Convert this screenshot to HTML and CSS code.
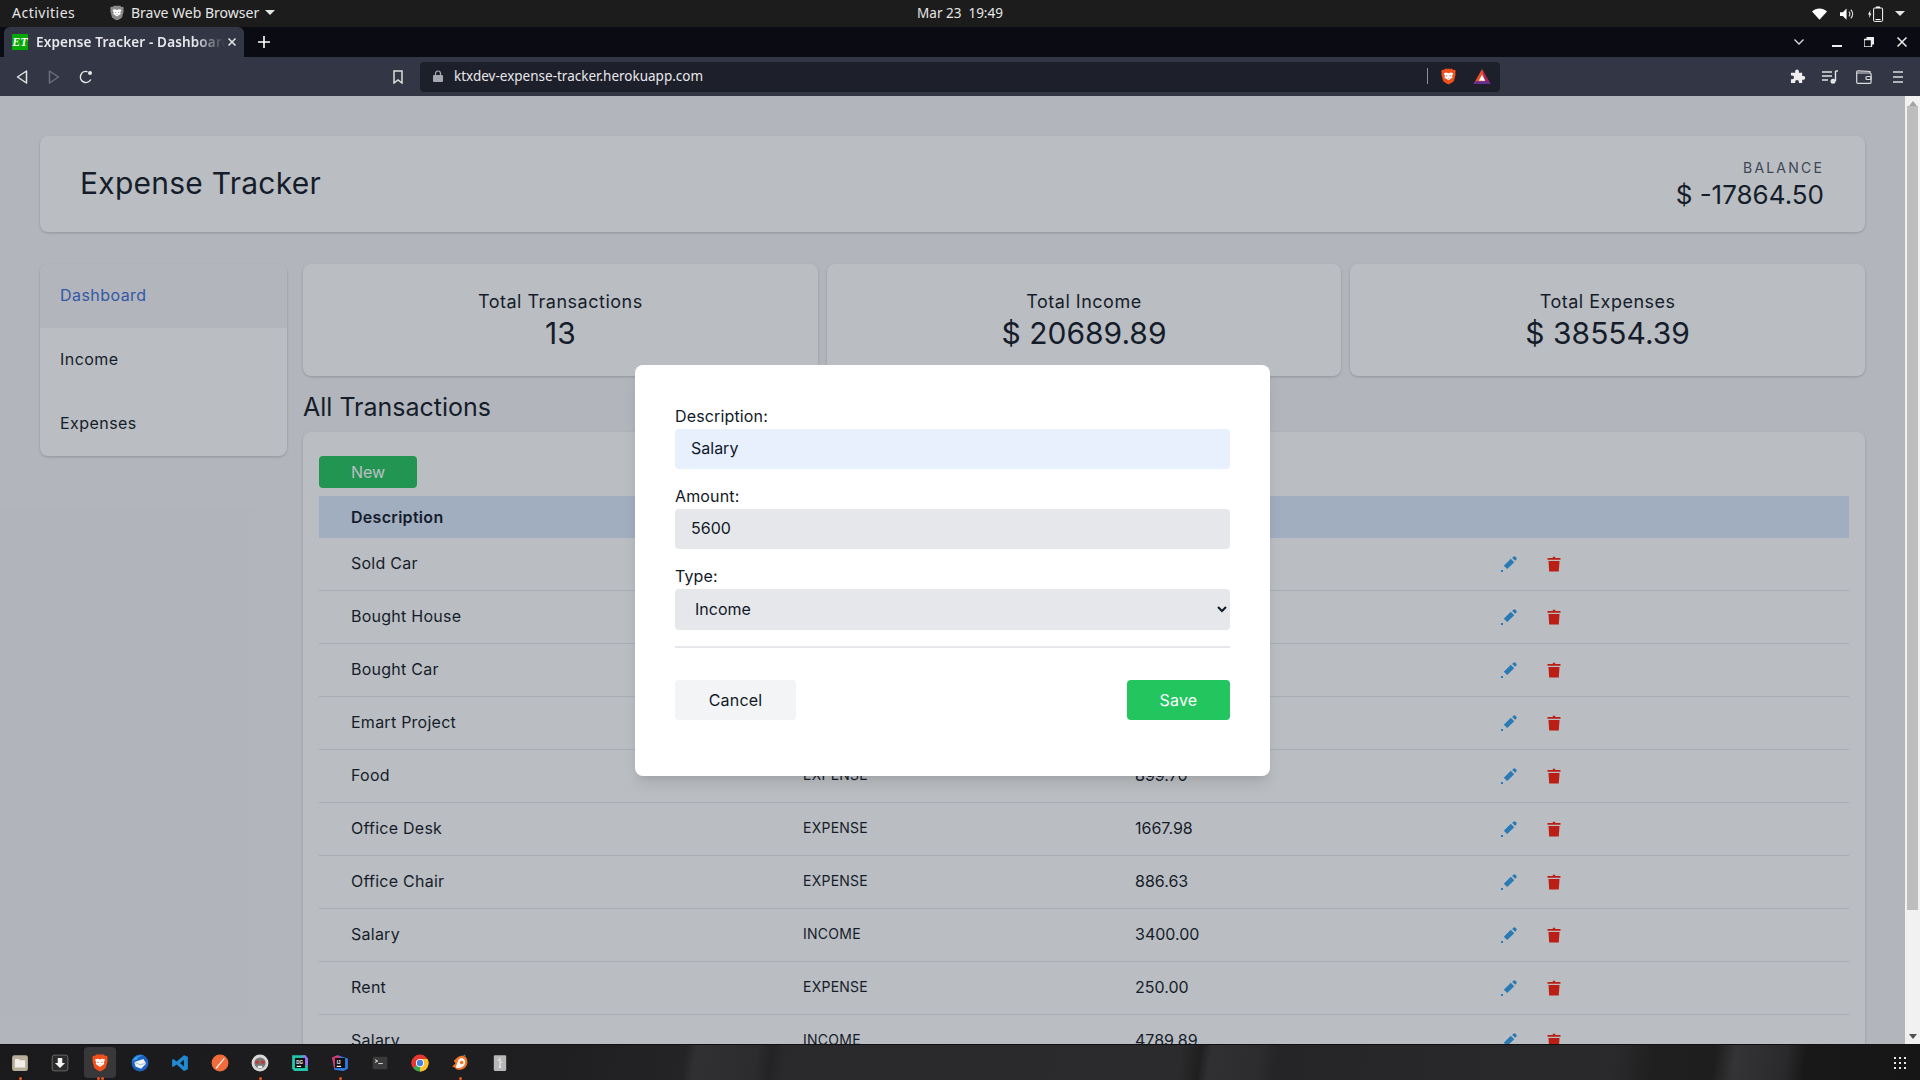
FILE: index.html
```html
<!DOCTYPE html>
<html lang="en">
<head>
<meta charset="utf-8">
<title>Expense Tracker - Dashboard</title>
<link rel="stylesheet" href="styles.css">
</head>
<body>
<svg class="sprite" aria-hidden="true">
  <symbol id="pen" viewBox="0 0 16 16">
    <path d="M2.800 9.700 9.800 2.800 13.200 6.200 6.200 13.100Z" fill="currentColor"/>
    <path d="M11.200 1.900 12.300.8a1.500 1.500 0 0 1 2.100 0l.8.800a1.500 1.500 0 0 1 0 2.100l-1.100 1.100Z" fill="currentColor"/>
    <rect x="0" y="14" width="2" height="2" fill="currentColor"/>
  </symbol>
  <symbol id="trash" viewBox="0 0 16 16">
    <path d="M1.500 2h5.300V.8h2.400V2h5.300v1.700h-13Z" fill="currentColor"/>
    <path d="M2.500 5h11l-.7 10.600H3.200Z" fill="currentColor"/>
  </symbol>
  <symbol id="shield" viewBox="0 0 16 18">
    <path d="M4.200.6h7.600l1.300 1.500 1.700-.3 1 1.600-.6 1.600.5 1.700-2 7.300-3.200 2.300L8 17.400l-2.500-1.100-3.200-2.300-2-7.300.5-1.700-.6-1.600 1-1.600 1.700.3Z" fill="currentColor"/>
    <path d="M3 5.400 5.600 4.800 8 5.600l2.400-.8L13 5.400l-1.200 3 .5 1.600-2.300 1.600L8 13l-2-1.400L3.700 10l.5-1.600Z" fill="#fff"/>
    <path d="M5.200 7.600 7 8.300 5.900 9.300ZM10.800 7.600 9 8.300 10.100 9.300ZM7.200 10.500h1.600L8 11.500Z" fill="currentColor"/>
  </symbol>
</svg>

<div class="topbar">
  <div class="top-left">
    <span class="activities">Activities</span>
    <span class="app-menu">
      <svg class="app-shield"><use href="#shield"/></svg>
      <span>Brave Web Browser</span>
      <i class="caret"></i>
    </span>
  </div>
  <div class="clock">Mar 23&nbsp;&nbsp;19:49</div>
  <div class="top-right">
    <svg class="tray-wifi" viewBox="0 0 16 12"><path d="M0 3.300C4.500-.9 11.500-.9 16 3.300L8 12Z" fill="#fff"/></svg>
    <svg class="tray-sound" viewBox="0 0 16 12"><path d="M0 4h3l4-4v12L3 8H0Z" fill="#fff"/><path d="M9.500 3.500a3.500 3.500 0 0 1 0 5M11.500 1.500a6 6 0 0 1 0 9" fill="none" stroke="#ddd" stroke-width="1.200"/></svg>
    <svg class="tray-batt" viewBox="0 0 16 16"><path d="M2.500 4 0 8.500h1.500L1 12l2.500-4.500H2Z" fill="#fff"/><rect x="5.600" y="2" width="9" height="13.400" rx="1" fill="none" stroke="#fff"/><rect x="8" y="0.500" width="4" height="1.500" fill="#fff"/><rect x="7.500" y="13" width="5" height="1" fill="#fff"/></svg>
    <i class="caret"></i>
  </div>
</div>

<div class="tabbar">
  <div class="tab">
    <span class="favicon">ET</span>
    <span class="tab-title">Expense Tracker - Dashboard</span>
    <svg class="tab-close" viewBox="0 0 10 10"><path d="M1.500 1.500l7 7M8.500 1.500l-7 7" stroke="#e8e8e8" stroke-width="1.500"/></svg>
  </div>
  <svg class="tab-new" viewBox="0 0 12 12"><path d="M6 0v12M0 6h12" stroke="#fff" stroke-width="1.600"/></svg>
  <div class="win-controls">
    <svg class="win-chevron" viewBox="0 0 10 6"><path d="M.5.500 5 5 9.500.500" fill="none" stroke="#ddd" stroke-width="1.300"/></svg>
    <svg class="win-min" viewBox="0 0 10 10"><rect y="8" width="10" height="2" fill="#eee"/></svg>
    <svg class="win-max" viewBox="0 0 10 10"><path d="M0 2.500h7.500V10H0Z" fill="none" stroke="#eee" stroke-width="1.400"/><path d="M2.500 0H10v7.500H8V2H2.500Z" fill="#eee"/></svg>
    <svg class="win-close" viewBox="0 0 10 10"><path d="M.5.500l9 9M9.500.500l-9 9" stroke="#eee" stroke-width="1.500"/></svg>
  </div>
</div>

<div class="toolbar">
  <svg class="tool-back" viewBox="0 0 12 14"><path d="M10.500 1 1.500 7l9 6Z" fill="none" stroke="#e4e4e4" stroke-width="1.500" stroke-linejoin="round"/></svg>
  <svg class="tool-forward" viewBox="0 0 12 14"><path d="M1.500 1l9 6-9 6Z" fill="none" stroke="#6c6f7b" stroke-width="1.500" stroke-linejoin="round"/></svg>
  <svg class="tool-reload" viewBox="0 0 14 14"><path d="M11.800 9.500A5.500 5.500 0 1 1 8.500 1.700" fill="none" stroke="#e8e8e8" stroke-width="1.500"/><circle cx="11" cy="3" r="2" fill="#e8e8e8"/></svg>
  <svg class="tool-bookmark" viewBox="0 0 10 14"><path d="M1 1h8v12L5 10l-4 3Z" fill="none" stroke="#ddd" stroke-width="1.500"/></svg>
  <div class="urlbar">
    <svg class="url-lock" viewBox="0 0 10 12"><path d="M2.500 5V3.500a2.500 2.500 0 0 1 5 0V5" fill="none" stroke="#a6a8b0" stroke-width="1.200"/><rect y="5" width="10" height="7" rx="1" fill="#a6a8b0"/></svg>
    <span class="url-text">ktxdev-expense-tracker.herokuapp.com</span>
    <span class="url-sep"></span>
    <svg class="url-brave"><use href="#shield"/></svg>
    <svg class="url-bat" viewBox="0 0 18 16"><path d="M9 0 18 16H0Z" fill="#e8502a"/><path d="M9 0 18 16H13Z" fill="#9e1f63"/><path d="M0 16H18L16.300 13H1.700Z" fill="#662d91"/><path d="M9 6 12.400 12.500H5.600Z" fill="#fff"/></svg>
  </div>
  <svg class="tool-ext" viewBox="0 0 16 16"><path d="M5.500 2.500a2 2 0 0 1 4 0V4H13v3.500h1.300a2 2 0 0 1 0 4H13V15H9.500v-1.300a2 2 0 0 0-4 0V15H1v-4.200h1.300a2 2 0 0 0 0-4H1V4h4.500Z" fill="#eee"/></svg>
  <svg class="tool-playlist" viewBox="0 0 16 14"><path d="M0 2h10M0 6h10M0 10h6" stroke="#e4e4e4" stroke-width="1.400"/><path d="M13.500 1v10" stroke="#e4e4e4" stroke-width="1.400"/><path d="M13.500 1H16" stroke="#e4e4e4" stroke-width="1.400"/><circle cx="11" cy="11.300" r="2.500" fill="#e4e4e4"/></svg>
  <svg class="tool-wallet" viewBox="0 0 16 14"><path d="M14 3V1.500L2 .8A1.300 1.300 0 0 0 .7 2.200v10c0 .7.600 1.200 1.200 1.200h12c.7 0 1.200-.5 1.200-1.200V4.200C15.100 3.500 14.600 3 14 3H1" fill="none" stroke="#dcdcdc" stroke-width="1.200"/><rect x="10" y="6.500" width="5" height="3" rx="1" fill="none" stroke="#dcdcdc" stroke-width="1.200"/></svg>
  <svg class="tool-menu" viewBox="0 0 10 12"><path d="M0 1h10M0 6h10M0 11h10" stroke="#dcdcdc" stroke-width="1.500"/></svg>
</div>

<div class="viewport">
  <div class="page">
    <main class="app">
      <header class="card app-header">
        <h1 class="brand">Expense Tracker</h1>
        <div class="balance">
          <div class="balance-label">Balance</div>
          <div class="balance-value">$ -17864.50</div>
        </div>
      </header>
      <div class="app-body">
        <nav class="card sidebar">
          <a class="nav-item is-active">Dashboard</a>
          <a class="nav-item">Income</a>
          <a class="nav-item">Expenses</a>
        </nav>
        <section class="content">
          <div class="stats">
            <div class="card stat"><div class="stat-label">Total Transactions</div><div class="stat-value">13</div></div>
            <div class="card stat"><div class="stat-label">Total Income</div><div class="stat-value">$ 20689.89</div></div>
            <div class="card stat"><div class="stat-label">Total Expenses</div><div class="stat-value">$ 38554.39</div></div>
          </div>
          <h2 class="section-title">All Transactions</h2>
          <div class="card table-card">
            <button class="btn-new">New</button>
            <table class="tx-table">
              <colgroup><col class="col-desc"><col class="col-type"><col class="col-amount"><col class="col-actions"></colgroup>
              <thead><tr><th>Description</th><th>Type</th><th>Amount</th><th></th></tr></thead>
              <tbody>
                <tr><td>Sold Car</td><td>INCOME</td><td>8500.00</td><td class="actions"><svg class="ic-pen"><use href="#pen"/></svg><svg class="ic-trash"><use href="#trash"/></svg></td></tr>
                <tr><td>Bought House</td><td>EXPENSE</td><td>24000.00</td><td class="actions"><svg class="ic-pen"><use href="#pen"/></svg><svg class="ic-trash"><use href="#trash"/></svg></td></tr>
                <tr><td>Bought Car</td><td>EXPENSE</td><td>9600.00</td><td class="actions"><svg class="ic-pen"><use href="#pen"/></svg><svg class="ic-trash"><use href="#trash"/></svg></td></tr>
                <tr><td>Emart Project</td><td>INCOME</td><td>4000.00</td><td class="actions"><svg class="ic-pen"><use href="#pen"/></svg><svg class="ic-trash"><use href="#trash"/></svg></td></tr>
                <tr><td>Food</td><td>EXPENSE</td><td>899.70</td><td class="actions"><svg class="ic-pen"><use href="#pen"/></svg><svg class="ic-trash"><use href="#trash"/></svg></td></tr>
                <tr><td>Office Desk</td><td>EXPENSE</td><td>1667.98</td><td class="actions"><svg class="ic-pen"><use href="#pen"/></svg><svg class="ic-trash"><use href="#trash"/></svg></td></tr>
                <tr><td>Office Chair</td><td>EXPENSE</td><td>886.63</td><td class="actions"><svg class="ic-pen"><use href="#pen"/></svg><svg class="ic-trash"><use href="#trash"/></svg></td></tr>
                <tr><td>Salary</td><td>INCOME</td><td>3400.00</td><td class="actions"><svg class="ic-pen"><use href="#pen"/></svg><svg class="ic-trash"><use href="#trash"/></svg></td></tr>
                <tr><td>Rent</td><td>EXPENSE</td><td>250.00</td><td class="actions"><svg class="ic-pen"><use href="#pen"/></svg><svg class="ic-trash"><use href="#trash"/></svg></td></tr>
                <tr><td>Salary</td><td>INCOME</td><td>4789.89</td><td class="actions"><svg class="ic-pen"><use href="#pen"/></svg><svg class="ic-trash"><use href="#trash"/></svg></td></tr>
              </tbody>
            </table>
          </div>
        </section>
      </div>
    </main>
    <div class="overlay">
      <form class="modal">
        <label class="field-label" for="f-desc">Description:</label>
        <input class="field field-auto" id="f-desc" value="Salary">
        <label class="field-label" for="f-amt">Amount:</label>
        <input class="field" id="f-amt" value="5600">
        <label class="field-label" for="f-type">Type:</label>
        <select class="field field-select" id="f-type"><option>Income</option><option>Expense</option></select>
        <hr class="divider">
        <div class="modal-actions">
          <button type="button" class="btn btn-cancel">Cancel</button>
          <button type="button" class="btn btn-save">Save</button>
        </div>
      </form>
    </div>
  </div>
  <div class="scrollbar">
    <i class="arrow-up"></i>
    <div class="track"><div class="thumb"></div></div>
    <i class="arrow-down"></i>
  </div>
</div>

<div class="taskbar">
  <div class="dock">
    <div class="dock-item has-dot"><svg class="dock-icon" viewBox="0 0 16 16"><rect x="1" y="1" width="14" height="14" rx="2" fill="#b9b09c"/><path d="M3.500 4.500h3.500l1 1h4.500v6.500h-9Z" fill="#f1eee8"/></svg></div>
    <div class="dock-item"><svg class="dock-icon" viewBox="0 0 16 16"><rect x="1" y="1" width="14" height="14" rx="2" fill="#2b2b2b" stroke="#888" stroke-width=".6"/><path d="M6 3.500h4V8h2.500L8 12.500 3.500 8H6Z" fill="#f4f4f4"/></svg></div>
    <div class="dock-item dock-active has-dot2"><svg class="dock-shield"><use href="#shield"/></svg></div>
    <div class="dock-item"><svg class="dock-icon" viewBox="0 0 16 16"><circle cx="8" cy="8" r="7.500" fill="#1c64c0"/><path d="M.8 6C3 2 8 0 11 1.500 7.500 2 6 3 5 5Z" fill="#3d9be9"/><path d="M3 7l8-2.500 2.500 4L9 13 4 11Z" fill="#f1f3f6"/><path d="M3.500 7.500 8 9.500l5.300-1.200" fill="none" stroke="#8aa" stroke-width=".6"/></svg></div>
    <div class="dock-item"><svg class="dock-icon" viewBox="0 0 16 16"><path d="M11.500 1 15 2.500v11L11.500 15 5 9.300 2 11.600 1 11V5l1-.6L5 6.700Zm0 4L8 8l3.500 3Z" fill="#1f8ad2"/></svg></div>
    <div class="dock-item"><svg class="dock-icon" viewBox="0 0 16 16"><circle cx="8" cy="8" r="7.500" fill="#f26b3a"/><path d="M4 12.500 11.500 3.500l.8.600L5 13Z" fill="#fff"/></svg></div>
    <div class="dock-item has-dot"><svg class="dock-icon" viewBox="0 0 16 16"><circle cx="8" cy="8" r="7.500" fill="#d8d8d8"/><circle cx="8" cy="8" r="5" fill="#777"/><rect x="4" y="6" width="3" height="2.500" fill="#c33"/><rect x="9" y="6" width="3" height="2.500" fill="#c33"/><path d="M6 10.500h4v2H6Z" fill="#eee"/></svg></div>
    <div class="dock-item"><svg class="dock-icon" viewBox="0 0 16 16"><path d="M1 1h11l3 3v11H3L1 13Z" fill="#21c7a8"/><path d="M10 1h3l2 3v7l-3-2Z" fill="#9775f8"/><rect x="3.500" y="3.500" width="9" height="9" fill="#111"/><rect x="5" y="10.500" width="4" height="1" fill="#fff"/><text x="4.600" y="8.500" class="ide-label">DG</text></svg></div>
    <div class="dock-item has-dot"><svg class="dock-icon" viewBox="0 0 16 16"><path d="M1 3l5-2 9 3v9l-4 2-8-1Z" fill="#2f7be6"/><path d="M1 3l5-2 3 3-6 9Z" fill="#e8336b"/><rect x="3.500" y="3.500" width="9" height="9" fill="#111"/><rect x="5" y="10.500" width="4" height="1" fill="#fff"/><text x="5.200" y="8.500" class="ide-label">IJ</text></svg></div>
    <div class="dock-item"><svg class="dock-icon" viewBox="0 0 16 16"><rect x="1.500" y="2.500" width="13" height="11" rx="1" fill="#3a3a3a"/><path d="M3.500 5 6 6.300 3.500 7.500" fill="none" stroke="#eee" stroke-width=".8"/><path d="M6.500 8.500h4" stroke="#eee" stroke-width=".8"/></svg></div>
    <div class="dock-item"><svg class="dock-icon" viewBox="0 0 16 16"><circle cx="8" cy="8" r="7.500" fill="#e5382f"/><path d="M8 8 1.500 12A7.500 7.500 0 0 1 1.500 4.200Z" fill="#e5382f"/><path d="M8 8h7.500A7.500 7.500 0 0 1 8 15.500 7.500 7.500 0 0 1 2 12.500Z" fill="#34a853"/><path d="M8 8V4.500h6.800A7.500 7.500 0 0 1 8 15.500Z" fill="#fbc02d"/><circle cx="8" cy="8" r="3.600" fill="#fff"/><circle cx="8" cy="8" r="2.800" fill="#3f83e8"/></svg></div>
    <div class="dock-item has-dot"><svg class="dock-icon" viewBox="0 0 16 16"><path d="M9 1.500C13 1 15 4 14.500 8c-.5 4-4 6.500-8 6-1.500-.2-2.700-1-3.200-2L1 11l3-2.500L2.500 6C4.500 4 6 2 9 1.500Z" fill="#f0762a"/><path d="M9 3.500c2 0 4 1.500 3.500 4.500S9 12.500 6.500 12.500 4 11 5 9.500 6 4 9 3.500Z" fill="#f5f5f5"/><circle cx="9.500" cy="7.500" r="1.600" fill="#f0762a"/><path d="M10.500 1 12.500.5 13 2.500Z" fill="#777"/></svg></div>
    <div class="dock-item"><svg class="dock-icon" viewBox="0 0 16 16"><rect x="2.500" y="1" width="11" height="14" rx="1" fill="#b7b7b7"/><path d="M8 3v8M8 6 6 5M8 8l2-1" stroke="#e4e4e4" stroke-width="1"/><circle cx="8" cy="11.500" r="1.200" fill="#e4e4e4"/></svg></div>
  </div>
  <div class="apps-grid"><i></i><i></i><i></i><i></i><i></i><i></i><i></i><i></i><i></i></div>
</div>
</body>
</html>
```

FILE: styles.css
```css
* { box-sizing: border-box; }
html, body { margin: 0; height: 100%; }
body {
  width: 1920px;
  height: 1080px;
  overflow: hidden;
  display: flex;
  flex-direction: column;
  font-family: Inter, "Noto Sans", sans-serif;
  color: #111827;
}
svg { display: block; flex: none; }
i { display: block; }
.sprite { position: absolute; width: 0; height: 0; }

/* GNOME top bar */
.topbar {
  height: 27px;
  flex: none;
  background: #1c1c1c;
  color: #e6e6e6;
  font: 14px/20px "Noto Sans", sans-serif;
  display: grid;
  grid-template-columns: 1fr auto 1fr;
  align-items: center;
  padding-bottom: 2px;
}
.top-left { display: flex; align-items: center; padding-left: 12px; }
.activities { width: 98px; letter-spacing: .5px; }
.app-menu { display: flex; align-items: center; white-space: nowrap; }
.app-shield { width: 14px; height: 16px; margin-right: 7px; color: #8a8a8a; }
.caret {
  width: 0; height: 0;
  border-left: 5px solid transparent;
  border-right: 5px solid transparent;
  border-top: 5px solid #e6e6e6;
  margin-left: 6px;
}
.clock { font-size: 13.500px; }
.top-right { display: flex; align-items: center; justify-content: flex-end; padding-right: 15px; padding-top: 2px; }
.tray-wifi { width: 15px; height: 12px; margin-right: 13px; }
.tray-sound { width: 15px; height: 12px; margin-right: 13px; }
.tray-batt { width: 16px; height: 16px; margin-right: 5px; }

/* Browser tabs */
.tabbar {
  height: 30px;
  flex: none;
  background: #0b0b14;
  display: flex;
  align-items: flex-end;
  padding-left: 4px;
}
.tab {
  width: 240px;
  height: 30px;
  background: #333645;
  border-radius: 6px 6px 0 0;
  display: flex;
  align-items: center;
  padding-left: 8px;
  color: #e8e8ec;
  font: 600 13.500px "Noto Sans", sans-serif;
  letter-spacing: .15px;
}
.favicon {
  width: 16px; height: 16px;
  flex: none;
  background: #06a806;
  color: #fff;
  font: italic 700 12px/16px "Liberation Serif", serif;
  text-align: center;
  margin-right: 8px;
}
.tab-title {
  width: 189px;
  white-space: nowrap;
  overflow: hidden;
  -webkit-mask-image: linear-gradient(90deg, #000 84%, transparent 100%);
  mask-image: linear-gradient(90deg, #000 84%, transparent 100%);
}
.tab-close { width: 10px; height: 10px; margin-left: 2px; }
.tab-new { width: 12px; height: 12px; margin: 0 0 9px 14px; }
.win-controls {
  margin-left: auto;
  height: 30px;
  display: flex;
  align-items: center;
  padding-right: 13px;
}
.win-chevron { width: 10px; height: 6px; margin-right: 28px; }
.win-min { width: 10px; height: 10px; margin-right: 22px; }
.win-max { width: 10px; height: 10px; margin-right: 23px; }
.win-close { width: 10px; height: 10px; }

/* Browser toolbar */
.toolbar {
  height: 39px;
  flex: none;
  background: #333645;
  display: flex;
  align-items: center;
  padding-left: 16px;
}
.tool-back { width: 12px; height: 14px; margin-right: 20px; }
.tool-forward { width: 12px; height: 14px; margin-right: 19px; }
.tool-reload { width: 14px; height: 14px; margin-right: 300px; }
.tool-bookmark { width: 10px; height: 14px; margin-right: 17px; }
.urlbar {
  width: 1080px;
  height: 30px;
  background: #1d1f2a;
  border-radius: 4px;
  display: flex;
  align-items: center;
  padding: 0 0 1px 13px;
  color: #e8e8ec;
  font: 13.500px "Noto Sans", sans-serif;
  margin-right: 290px;
}
.url-lock { width: 10px; height: 12px; margin-right: 11px; }
.url-text { width: 973px; white-space: nowrap; }
.url-sep { width: 1px; height: 16px; background: #8d8f99; margin-right: 13px; }
.url-brave { width: 15px; height: 17px; color: #f0501c; margin-right: 17px; }
.url-bat { width: 18px; height: 15px; }
.tool-ext { width: 15px; height: 15px; margin-right: 17px; }
.tool-playlist { width: 16px; height: 14px; margin-right: 18px; }
.tool-wallet { width: 16px; height: 14px; margin-right: 21px; }
.tool-menu { width: 10px; height: 12px; }

/* Viewport */
.viewport {
  flex: 1;
  min-height: 0;
  display: flex;
}
.page {
  position: relative;
  flex: 1;
  min-width: 0;
  overflow: hidden;
  background: #f3f4f6;
}
.app { padding: 40px 40px 0; display: flex; flex-direction: column; gap: 32px; }
.card {
  background: #fff;
  border-radius: 8px;
  box-shadow: 0 1px 3px rgba(0,0,0,.12), 0 1px 2px rgba(0,0,0,.08);
}
.app-header {
  height: 96px;
  display: flex;
  align-items: center;
  justify-content: space-between;
  padding: 0 41px 0 40px;
}
.brand { margin: 0 0 2px; font-size: 30px; font-weight: 400; line-height: 36px; letter-spacing: .25px; }
.balance { text-align: right; padding-top: 2px; }
.balance-label {
  font-size: 14px;
  line-height: 20px;
  letter-spacing: 2.200px;
  text-transform: uppercase;
  color: #4b5563;
}
.balance-value { font-size: 26px; line-height: 34px; }
.app-body { display: flex; gap: 16px; align-items: flex-start; }
.sidebar { width: 247px; flex: none; overflow: hidden; }
.nav-item { display: flex; align-items: center; height: 64px; padding: 0 0 2px 20px; font-size: 16px; letter-spacing: .45px; }
.is-active { background: #f3f4f6; color: #3b6fd8; }
.content { flex: 1; min-width: 0; }
.stats { display: grid; grid-template-columns: repeat(3, 1fr); gap: 9px; }
.stat { height: 112px; text-align: center; padding-top: 26px; }
.stat-label { font-size: 18px; line-height: 23px; letter-spacing: .5px; }
.stat-value { font-size: 30px; line-height: 40px; }
.section-title { margin: 0; height: 56px; padding-top: 8px; line-height: 46px; font-size: 25px; font-weight: 400; }
.table-card { padding: 24px 16px 0; }
.btn-new {
  display: block;
  width: 98px;
  height: 32px;
  border: 0;
  border-radius: 4px;
  background: #22c55e;
  color: #fff;
  font: 16px Inter, sans-serif;
  margin-bottom: 8px;
}
.tx-table { width: 100%; table-layout: fixed; border-collapse: separate; border-spacing: 0; font-size: 16px; }
.col-desc { width: 452px; }
.col-type { width: 332px; }
.col-amount { width: 366px; }
.col-actions { width: 380px; }
.tx-table th {
  height: 42px;
  background: #dbeafe;
  text-align: left;
  font-weight: 600;
  padding: 0 0 1px 32px;
  letter-spacing: .3px;
}
.tx-table td { height: 53px; padding: 0 0 3px 32px; border-bottom: 1px solid #e5e7eb; letter-spacing: .25px; }
.tx-table td:nth-child(2) { font-size: 14px; }
.tx-table td:nth-child(3) { letter-spacing: 0; }
.tx-table .actions { padding-bottom: 3px; }
.ic-pen, .ic-trash { display: inline-block; width: 16px; height: 16px; vertical-align: middle; }
.ic-pen { color: #2f9eee; margin-right: 29px; }
.ic-trash { color: #ff1a05; }

/* Modal */
.overlay {
  position: absolute;
  inset: 0;
  background: rgba(31,41,55,.31);
  display: flex;
  align-items: center;
  justify-content: center;
}
.modal {
  width: 635px;
  height: 411px;
  background: #fff;
  border-radius: 8px;
  padding: 40px;
  box-shadow: 0 10px 15px -3px rgba(0,0,0,.1), 0 4px 6px -2px rgba(0,0,0,.05);
  display: flex;
  flex-direction: column;
}
.field-label { display: block; height: 24px; line-height: 22px; font-size: 16px; letter-spacing: .15px; }
.field {
  display: block;
  width: 100%;
  height: 40px;
  border: 0;
  border-radius: 4px;
  background: #e5e7eb;
  padding: 0 16px 1px;
  margin-bottom: 16px;
  font: 16px Inter, sans-serif;
  color: #111827;
}
.field-auto { background: #e8f0fe; }
.field-select { height: 41px; margin-bottom: 16px; }
.divider { width: 100%; height: 2px; margin: 0; border: 0; background: #e5e7eb; }
.modal-actions { display: flex; justify-content: space-between; margin-top: 32px; }
.btn { height: 40px; border: 0; border-radius: 4px; font: 16px Inter, sans-serif; padding-bottom: 1px; letter-spacing: .2px; }
.btn-cancel { width: 121px; background: #f3f4f6; color: #111827; }
.btn-save { width: 103px; background: #22c55e; color: #fff; }

/* Scrollbar */
.scrollbar {
  width: 15px;
  flex: none;
  background: #f1f1f1;
  display: flex;
  flex-direction: column;
  align-items: center;
}
.arrow-up, .arrow-down {
  width: 0; height: 0;
  flex: none;
  border-left: 4px solid transparent;
  border-right: 4px solid transparent;
}
.arrow-up { border-bottom: 5px solid #a3a3a3; margin: 5px 0; }
.arrow-down { border-top: 5px solid #505050; margin: 5px 0; }
.track { flex: 1; width: 100%; padding: 0 2px; }
.thumb { height: 804px; margin-top: -5px; background: #bdbdbd; }

/* Dock */
.taskbar {
  height: 36px;
  flex: none;
  display: flex;
  align-items: center;
  justify-content: space-between;
  padding-right: 14px;
  background: linear-gradient(98deg,
    #1a1a1c 0, #1f1f21 560px, #242426 680px, #303033 690px, #2c2c2e 750px,
    #232325 765px, #2a2a2c 780px, #2b2b2d 1170px, #1f1f20 1190px, #303033 1200px,
    #2c2c2e 1250px, #252527 1265px, #2a2a2c 1600px, #1f1f20 1640px, #1e1e1e 1700px,
    #343436 1720px, #2a2a2c 1770px, #181818 1790px, #161616 1920px);
  border-top: 1px solid #111;
}
.dock { display: flex; }
.dock-item {
  position: relative;
  width: 40px;
  height: 35px;
  display: flex;
  align-items: center;
  justify-content: center;
}
.dock-icon { width: 18px; height: 18px; }
.dock-shield { width: 16px; height: 18px; color: #f0501c; }
.dock-active::before {
  content: "";
  position: absolute;
  left: 4px; right: 4px; top: 2px; bottom: 2px;
  background: rgba(255,255,255,.13);
  border-radius: 4px;
}
.dock-active svg { position: relative; }
.has-dot::after, .has-dot2::after {
  content: "";
  position: absolute;
  bottom: 0;
  left: 19px;
  width: 3px; height: 3px;
  border-radius: 50%;
  background: #e9541f;
}
.has-dot2::after { left: 17px; box-shadow: 4px 0 0 #e9541f; }
.apps-grid { display: grid; grid-template-columns: repeat(3, 2px); gap: 3px; }
.apps-grid i { width: 2px; height: 2px; background: #e8e8e8; }
.ide-label { font: 700 4px "Liberation Sans", sans-serif; fill: #fff; }
```
